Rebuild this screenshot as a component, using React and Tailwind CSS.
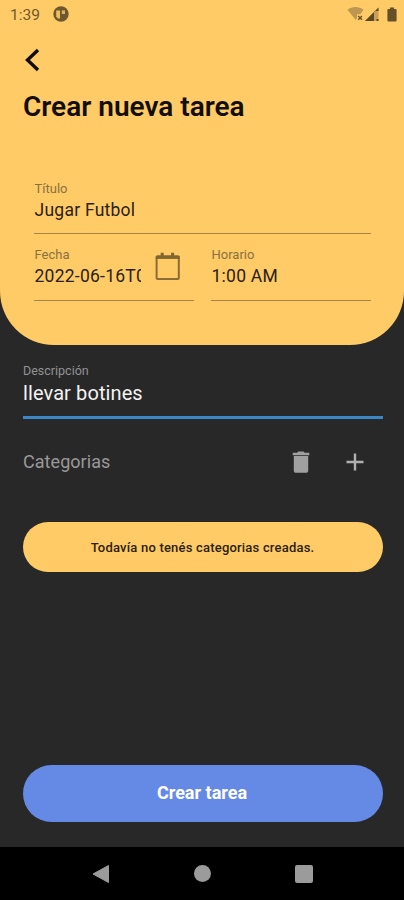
import { useState } from 'react'

function StatusBar() {
  return (
    <div className="flex h-7 items-center justify-between pl-[10px] pr-[7px] text-[#6f582f]">
      <div className="flex items-center">
        <span className="w-[43px] pt-px text-[15.5px] leading-7">1:39</span>
        <svg viewBox="0 0 16 16" className="h-4 w-4">
          <circle cx="8" cy="8" r="7.7" fill="currentColor" />
          <path d="M3.2 4.4H7V12.4H4.8L3.2 10.2Z" fill="#eebd60" />
          <path d="M8.8 4.4H12V8H8.8Z" fill="#e0b15a" />
        </svg>
      </div>
      <div className="flex items-center">
        {/* Wifi */}
        <svg viewBox="0 0 18 16" className="h-4 w-[18px]">
          <path d="M0.5 3.8C5 0.2 12 0.2 16.5 3.8L13.3 8.3H10V12L8.6 14Z" fill="#bd9650" />
          <path d="M11.2 10L15 13.8M15 10L11.2 13.8" stroke="#6a532b" strokeWidth="1.4" />
        </svg>
        {/* Signal */}
        <svg viewBox="0 0 14 14" className="h-[14px] w-[14px]">
          <path d="M0 14L13.5 0.5V14Z" fill="#c9a057" />
          <path d="M0 14L9 5V14Z" fill="#5c4823" />
          <path d="M9 5L13.5 0.5V4H9ZM11.5 12H13.5V14H11.5Z" fill="#5c4823" />
        </svg>
        {/* Battery */}
        <svg viewBox="0 0 10 15" className="ml-2 h-[15px] w-[10px]">
          <path d="M3 0.5H7V2H8.6Q9.6 2 9.6 3V13.6Q9.6 14.6 8.6 14.6H1.4Q0.4 14.6 0.4 13.6V3Q0.4 2 1.4 2H3Z" fill="#66502a" />
        </svg>
      </div>
    </div>
  )
}

function Field({ label, value, className = '', children }) {
  return (
    <label className={`flex border-b border-[#a98447] ${className}`}>
      <span className="flex min-w-0 flex-1 flex-col">
        <span className="h-4 pl-[0.5px] text-[13px] leading-4 text-[#89703f]">{label}</span>
        <span className="mt-[3px] h-5 overflow-hidden whitespace-nowrap pl-[0.5px] text-[17.5px] leading-5 tracking-[0.25px] text-[#2b2111]">
          {value}
        </span>
      </span>
      {children}
    </label>
  )
}

function CalendarIcon() {
  return (
    <svg viewBox="0 0 26 28" className="ml-[14px] mr-[13px] mt-[5px] h-7 w-[26px] shrink-0">
      <path d="M2.6 4.2H22.8Q23.8 4.2 23.8 5.2V26Q23.8 27 22.8 27H2.6Q1.6 27 1.6 26V5.2Q1.6 4.2 2.6 4.2Z" fill="none" stroke="#8a6d35" strokeWidth="2" />
      <path d="M0.8 5.4H24.6" stroke="#80652f" strokeWidth="3" />
      <path d="M7.2 0.8V4M17.6 0.8V4" stroke="#80652f" strokeWidth="3" />
    </svg>
  )
}

function NavigationBar() {
  return (
    <nav className="flex h-[53px] items-center justify-center gap-[84px] bg-black pl-px">
      <svg viewBox="0 0 18 20" className="h-5 w-[18px]">
        <path d="M16.5 1.5V18.5L1 10Z" fill="#9b9b9b" stroke="#9b9b9b" strokeLinejoin="round" />
      </svg>
      <span className="h-[17px] w-[17px] rounded-full bg-[#9b9b9b]" />
      <span className="h-[18px] w-[18px] rounded-[2px] bg-[#9b9b9b]" />
    </nav>
  )
}

export default function App() {
  const [description, setDescription] = useState('llevar botines')

  return (
    <div className="flex h-[900px] w-[404px] flex-col overflow-hidden bg-[#282828] font-[Roboto,sans-serif]">
      <header className="h-[344.5px] shrink-0 rounded-b-[54px] bg-[#ffcb67]">
        <StatusBar />
        <button type="button" aria-label="Volver" className="ml-6 mt-5 block h-6 w-4">
          <svg viewBox="0 0 16 24" className="h-6 w-4">
            <path d="M14 2L3.5 12L14 22" fill="none" stroke="#110d06" strokeWidth="3.4" />
          </svg>
        </button>
        <h1 className="ml-[23px] mt-[19px] text-[28px] font-semibold leading-8 text-[#120e06]">Crear nueva tarea</h1>
        <div className="ml-[34px] mr-[33px] mt-[58px]">
          <Field label="Título" value="Jugar Futbol" className="h-[53px]" />
          <div className="mt-[13px] grid grid-cols-2 gap-[17px]">
            <Field label="Fecha" value="2022-06-16T00:00" className="h-[54px]">
              <CalendarIcon />
            </Field>
            <Field label="Horario" value="1:00 AM" className="h-[54px]" />
          </div>
        </div>
      </header>

      <main className="flex flex-1 flex-col pl-[22.5px] pr-[21.5px]">
        <label className="mt-[18px] flex h-[56px] flex-col border-b-[3px] border-[#3b86c4] pl-[0.5px]">
          <span className="text-[12.5px] leading-4 text-[#929292]">Descripción</span>
          <input
            value={description}
            onChange={(e) => setDescription(e.target.value)}
            className="mt-[2px] h-6 bg-transparent text-[20px] leading-6 tracking-[0.1px] text-[#f3f3f3] outline-none"
          />
        </label>

        <div className="mt-[31px] flex h-6 items-center pl-[0.5px]">
          <h2 className="flex-1 text-[18px] tracking-[0.05px] text-[#999999]">Categorias</h2>
          <button type="button" aria-label="Eliminar categoria">
            <svg viewBox="0 0 18 22" className="h-[22px] w-[18px]">
              <path d="M0.7 1.8H5.2L6.2 0.5H11.6L12.6 1.8H17.3V4.2H0.7ZM1.8 5H16.2V20Q16.2 21.7 14.5 21.7H3.5Q1.8 21.7 1.8 20Z" fill="#a0a0a0" />
            </svg>
          </button>
          <button type="button" aria-label="Agregar categoria" className="ml-9 mr-[18.5px]">
            <svg viewBox="0 0 18 18" className="h-[18px] w-[18px]">
              <path d="M9 0.5V17.5M0.5 9H17.5" stroke="#b0b0b0" strokeWidth="2.4" />
            </svg>
          </button>
        </div>

        <p className="mt-12 h-[50px] rounded-full bg-[#ffcb67] text-center text-[13px] font-medium leading-[51px] tracking-[0.2px] text-[#2c210d]">
          Todavía no tenés categorias creadas.
        </p>

        <button
          type="button"
          className="mb-[25.5px] mt-auto h-[57px] rounded-full bg-[#658ae5] pb-px pr-px text-[18px] font-bold text-white"
        >
          Crear tarea
        </button>
      </main>

      <NavigationBar />
    </div>
  )
}
